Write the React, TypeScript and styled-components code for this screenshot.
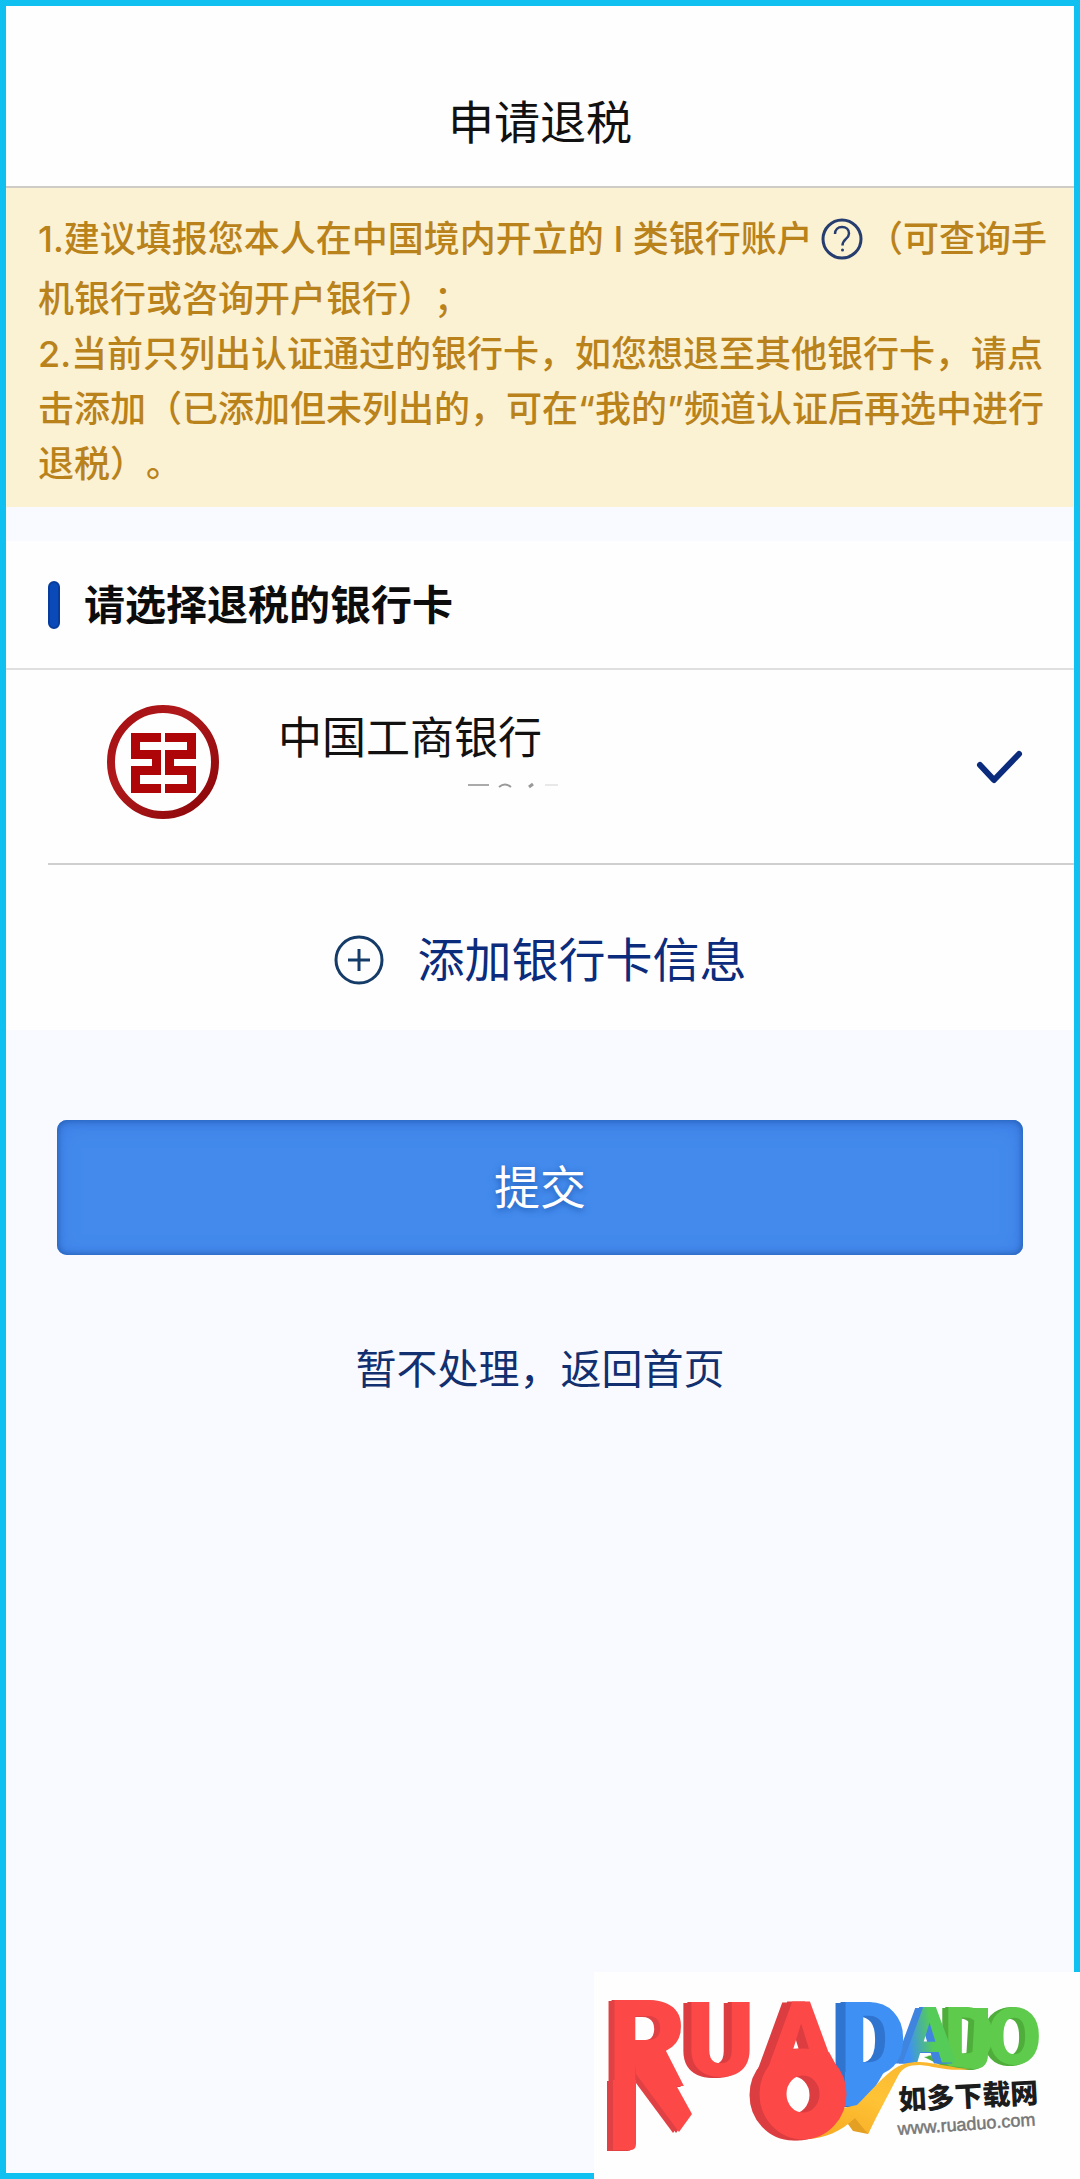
import React, { useState } from "react";
import styled, { createGlobalStyle } from "styled-components";

const GlobalStyle = createGlobalStyle`
  *, *::before, *::after { box-sizing: border-box; }
  body {
    margin: 0;
    background: #f9faff;
    font-family: Inter, "Noto Sans CJK SC", sans-serif;
    text-spacing-trim: space-all;
  }
  button, input { font: inherit; }
`;

const navy = "#0b2c7c";

const Page = styled.div`
  position: relative;
  display: flex;
  flex-direction: column;
  min-height: 100vh;
  border: 6px solid #10c0f0;
  background: #f9faff;
`;

const Header = styled.header`
  display: flex;
  align-items: flex-end;
  justify-content: center;
  height: 182px;
  padding-bottom: 32px;
  background: #fefefe;
  border-bottom: 2px solid #cfccc6;
`;

const Title = styled.h1`
  margin: 0;
  font-size: 46px;
  line-height: 64px;
  font-weight: 400;
  color: #111;
`;

const Notice = styled.section`
  padding: 24px 20px 15px 32px;
  background: #fbf1d3;
  color: #b9821a;
  font-size: 36px;
  font-weight: 500;
  line-height: 55px;
`;

const NoticeItem = styled.p`
  margin: 0;
`;

const HelpButton = styled.button`
  display: inline-flex;
  margin: 6px 4px 12px 8px;
  padding: 0;
  border: 0;
  background: none;
  color: #263d70;
  vertical-align: middle;
  cursor: pointer;
`;

const Panel = styled.section`
  margin-top: 34px;
  background: #fefefe;
`;

const PanelHeader = styled.div`
  display: flex;
  align-items: center;
  gap: 24px;
  height: 129px;
  padding: 0 42px;
  border-bottom: 2px solid #dfdfdf;
`;

const Marker = styled.span`
  width: 12px;
  height: 48px;
  border-radius: 6px;
  background: #0a4ab8;
  border: 2px solid #073c9c;
`;

const PanelTitle = styled.h2`
  margin: 0;
  font-size: 41px;
  line-height: 60px;
  font-weight: 700;
  color: #0c0c0c;
`;

const BankRow = styled.label`
  display: flex;
  align-items: center;
  height: 195px;
  margin-left: 42px;
  padding: 0 50px 0 58px;
  border-bottom: 2px solid #cfcfcf;
  cursor: pointer;
`;

const LogoSlot = styled.span`
  display: flex;
  padding-bottom: 10px;
`;

const BankInfo = styled.span`
  display: flex;
  flex: 1;
  flex-direction: column;
  align-self: flex-start;
  gap: 14px;
  padding-top: 38px;
  margin-left: 58px;
`;

const BankName = styled.span`
  font-size: 44px;
  line-height: 60px;
  color: #111;
`;

const HiddenRadio = styled.input`
  position: absolute;
  opacity: 0;
  width: 1px;
  height: 1px;
  margin: 0;
`;

const MaskedNumber = styled.svg`
  margin-left: 187px;
`;

const AddButton = styled.button`
  display: flex;
  align-items: center;
  justify-content: center;
  gap: 34px;
  width: 100%;
  height: 165px;
  padding: 24px 0 0;
  border: 0;
  background: none;
  color: ${navy};
  font-size: 47px;
  line-height: 68px;
  cursor: pointer;
`;

const Actions = styled.div`
  display: flex;
  flex-direction: column;
  align-items: center;
  gap: 84px;
  padding: 90px 51px;
`;

const SubmitButton = styled.button`
  width: 100%;
  height: 135px;
  padding: 0 0 2px;
  border: 0;
  border-radius: 10px;
  background: #438aec;
  box-shadow: inset 0 0 6px 1px #2560b4, inset 0 4px 20px #3a78e0;
  color: #fff;
  font-size: 46px;
  line-height: 68px;
  text-shadow: 0 2px 6px #1f5cb5;
  cursor: pointer;
`;

const HomeLink = styled.a`
  font-size: 41px;
  line-height: 60px;
  color: #12306f;
  text-decoration: none;
`;

const Watermark = styled.aside`
  position: absolute;
  right: -6px;
  bottom: -6px;
  display: flex;
  background: #fefefe;
`;

const LogoText = styled.text`
  font-family: Roboto, sans-serif;
  font-weight: 900;
`;

const Solid = styled.g<{ $side: string; $depth: number }>`
  filter: ${({ $side, $depth }) =>
    `drop-shadow(-${$depth}px 0 0 ${$side}) drop-shadow(-${$depth}px 1px 0 ${$side})`};
`;

const SiteName = styled.text`
  font-family: "Noto Sans CJK SC", sans-serif;
  font-weight: 900;
`;

const SiteUrl = styled.text`
  font-family: "Liberation Sans", sans-serif;
`;

function HelpIcon() {
  return (
    <svg width="42" height="42" viewBox="0 0 42 42" fill="none" stroke="currentColor" aria-hidden="true">
      <circle cx="21" cy="21" r="19" strokeWidth="3" />
      <path d="M14 16c0-4.500 3-7 7-7s7 2.500 7 6.500c0 5.500-6.500 5.500-6.500 12" strokeWidth="2.500" />
      <circle cx="21.500" cy="32" r="1.500" fill="currentColor" stroke="none" />
    </svg>
  );
}

function BankLogo() {
  return (
    <svg width="114" height="116" viewBox="0 0 114 116" aria-hidden="true">
      <defs>
        <linearGradient id="ring" x1="0" y1="0" x2="1" y2="1">
          <stop offset="0" stopColor="#a50d10" />
          <stop offset="0.350" stopColor="#b01a1c" />
          <stop offset="1" stopColor="#8a0508" />
        </linearGradient>
      </defs>
      <ellipse cx="57" cy="58" rx="52" ry="53" fill="none" stroke="url(#ring)" strokeWidth="8" />
      <path
        fill="#ad0508"
        d="M25 29H55V38H34V46H55V71H34V80H55V89H25V62H46V55H25ZM59 29H90V55H68V62H90V89H59V80H81V71H59V46H81V38H59Z"
      />
    </svg>
  );
}

function CheckIcon() {
  return (
    <svg width="48" height="40" viewBox="0 0 48 40" fill="none" aria-hidden="true">
      <path d="M4 18 18 33 43 7" stroke={navy} strokeWidth="6" strokeLinecap="round" strokeLinejoin="round" />
    </svg>
  );
}

function PlusIcon() {
  return (
    <svg width="50" height="50" viewBox="0 0 50 50" fill="none" stroke="#153c68" aria-hidden="true">
      <circle cx="25" cy="25" r="23" strokeWidth="3" />
      <path d="M25 14V36M14 25H36" strokeWidth="3" />
    </svg>
  );
}

function RuaduoLogo() {
  return (
    <svg width="486" height="207" viewBox="0 0 486 207">
      <defs>
        <linearGradient id="blueGreen" x1="0" y1="0.600" x2="1" y2="0.400">
          <stop offset="0.100" stopColor="#3e90f5" />
          <stop offset="0.550" stopColor="#55cc58" />
        </linearGradient>
        <linearGradient id="ribbon" x1="0" y1="1" x2="1" y2="0">
          <stop offset="0" stopColor="#f4a51f" />
          <stop offset="0.500" stopColor="#ffc336" />
          <stop offset="1" stopColor="#f8b32c" />
        </linearGradient>
      </defs>
      <Solid $side="#4fae3b" $depth={3}>
        <LogoText x="393" y="92" fontSize="79" fill="#5fcb4c">O</LogoText>
      </Solid>
      <Solid $side="#4fae3b" $depth={3}>
        <g fill="#5fcb4c">
          <LogoText x="350" y="92" fontSize="79">D</LogoText>
          <path d="M381 36H394V82Q394 97 380 97L356 94 336 84 350 82 378 88Z" />
        </g>
      </Solid>
      <Solid $side="#3f85df" $depth={4}>
        <LogoText x="309" y="90" fontSize="78" fill="url(#blueGreen)">A</LogoText>
      </Solid>
      <Solid $side="#2f75cf" $depth={5}>
        <g fill="#3e90f5">
          <LogoText x="246" y="104" fontSize="103">D</LogoText>
          <path d="M251 100H290L276 124 264 134 251 134Z" />
        </g>
      </Solid>
      <path d="M251 148 263 144 282 144 274 162 259 159Z" fill="#e3a023" />
      <path
        fill="url(#ribbon)"
        d="M199 166C224 162 236 152 249 136L263 133C276 120 286 108 296 100C306 92 314 90 326 90C344 91 358 96 376 97C354 100 340 94 326 93C314 93 308 96 304 104L283 144 274 162 261 146C244 162 224 170 199 166Z"
      />
      <Solid $side="#e04144" $depth={3}>
        <g fill="#fd4848">
          <LogoText x="14" y="114" fontSize="121">R</LogoText>
          <path d="M19 108H42V172Q42 178 36 178H19Z" />
          <path d="M40 84 66 84 98 142 85 160 42 102Z" />
        </g>
      </Solid>
      <Solid $side="#dc3d40" $depth={4}>
        <LogoText x="92" y="104" fontSize="104" fill="#fd4848">U</LogoText>
      </Solid>
      <Solid $side="#dc3d40" $depth={5}>
        <g fill="#fd4848">
          <LogoText x="170" y="108" fontSize="109">A</LogoText>
          <path d="M180 86 198 84 186 100ZM223 84 235 80 248 104Z" />
          <ellipse cx="209" cy="122" rx="30" ry="32" fill="none" stroke="#fd4848" strokeWidth="27" />
        </g>
      </Solid>
      <SiteName x="305" y="138" fontSize="28" fill="#1c1c1c" transform="rotate(-3 305 138)">如多下载网</SiteName>
      <SiteUrl x="304" y="163" fontSize="18" fill="#777" stroke="#777" strokeWidth="0.500" transform="rotate(-4 304 163)">
        www.ruaduo.com
      </SiteUrl>
    </svg>
  );
}

export default function App() {
  const [bank, setBank] = useState("icbc");

  return (
    <>
      <GlobalStyle />
      <Page>
        <Header>
          <Title>申请退税</Title>
        </Header>
        <main>
          <Notice>
            <NoticeItem>
              1.建议填报您本人在中国境内开立的 I 类银行账户
              <HelpButton type="button" aria-label="I 类银行账户说明">
                <HelpIcon />
              </HelpButton>
              （可查询手机银行或咨询开户银行）；
            </NoticeItem>
            <NoticeItem>
              2.当前只列出认证通过的银行卡，如您想退至其他银行卡，请点击添加（已添加但未列出的，可在“我的”频道认证后再选中进行退税）。
            </NoticeItem>
          </Notice>
          <Panel>
            <PanelHeader>
              <Marker />
              <PanelTitle>请选择退税的银行卡</PanelTitle>
            </PanelHeader>
            <BankRow>
              <HiddenRadio
                type="radio"
                name="bank"
                value="icbc"
                checked={bank === "icbc"}
                onChange={(e) => setBank(e.target.value)}
              />
              <LogoSlot>
                <BankLogo />
              </LogoSlot>
              <BankInfo>
                <BankName>中国工商银行</BankName>
                <MaskedNumber width="100" height="8" viewBox="0 0 100 8" fill="none" aria-hidden="true">
                  <path d="M3 3H24" stroke="#aaa" strokeWidth="2" />
                  <path d="M34 5Q40 0 46 5" stroke="#999" strokeWidth="2" />
                  <path d="M64 5 68 2" stroke="#999" strokeWidth="3" />
                  <path d="M80 3H93" stroke="#e8e8e8" strokeWidth="2" />
                </MaskedNumber>
              </BankInfo>
              {bank === "icbc" && <CheckIcon />}
            </BankRow>
            <AddButton type="button">
              <PlusIcon />
              添加银行卡信息
            </AddButton>
          </Panel>
          <Actions>
            <SubmitButton type="button">提交</SubmitButton>
            <HomeLink href="#home">暂不处理，返回首页</HomeLink>
          </Actions>
        </main>
        <Watermark>
          <RuaduoLogo />
        </Watermark>
      </Page>
    </>
  );
}
